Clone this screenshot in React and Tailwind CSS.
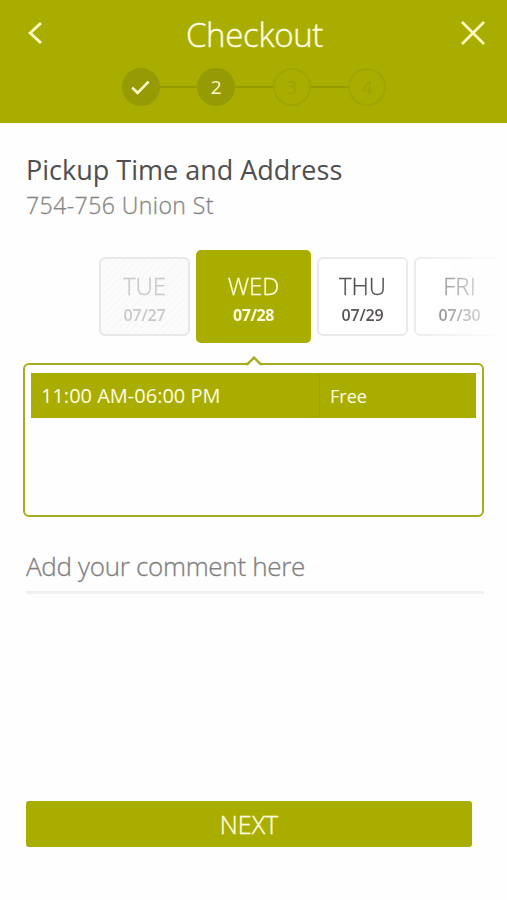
import React, { useState } from 'react';

const steps = [1, 2, 3, 4];

const days = [
    { name: 'TUE', date: '07/27', disabled: true },
    { name: 'WED', date: '07/28' },
    { name: 'THU', date: '07/29' },
    { name: 'FRI', date: '07/30' },
];

const Step = ({ number, current }) => {
    if (number > current) {
        return (
            <div className="flex h-[38px] w-[38px] items-center justify-center rounded-full border-2 border-[#a1a502] text-[19px] text-[#9ea202]">
                {number}
            </div>
        );
    }

    return (
        <div className="flex h-[38px] w-[38px] items-center justify-center rounded-full bg-[#959a05] text-[19px] text-[#fdfbd0]">
            {number < current ? (
                <svg width="19" height="15" viewBox="0 0 19 15" fill="none" stroke="#fdfbd0" strokeWidth="2.6">
                    <path d="M1.2 7.6 L6.6 12.8 L17.6 1.6" />
                </svg>
            ) : (
                number
            )}
        </div>
    );
};

const DayCard = ({ day, active, onSelect }) => {
    if (active) {
        return (
            <button className="flex h-[93px] w-[115px] shrink-0 flex-col items-center rounded-[5px] bg-[#a9ad00] pt-[21px] text-[#fffde0]">
                <span className="text-[24px] leading-[30px] font-light [-webkit-text-stroke:0.3px]">{day.name}</span>
                <span className="text-[16px] leading-[28px] font-bold tracking-[-0.4px]">{day.date}</span>
            </button>
        );
    }

    return (
        <button
            disabled={day.disabled}
            onClick={onSelect}
            className={
                day.disabled
                    ? 'flex h-[79px] w-[91px] shrink-0 flex-col items-center rounded-[6px] border-2 border-[#e8e8e8] bg-[repeating-linear-gradient(135deg,#f9f9f9_0px,#f9f9f9_3px,#fcfcfc_3px,#fcfcfc_5px)] pt-[12px] text-[#c9c9c9]'
                    : 'flex h-[79px] w-[91px] shrink-0 flex-col items-center rounded-[6px] border-2 border-[#e9e9e9] bg-white pt-[12px] text-[#575353]'
            }
        >
            <span className="text-[24px] leading-[30px] font-light [-webkit-text-stroke:0.3px]">{day.name}</span>
            <span className="text-[16px] leading-[28px] font-semibold tracking-[-0.2px]">{day.date}</span>
        </button>
    );
};

const App = () => {
    const [selected, setSelected] = useState('07/28');

    return (
        <div className="flex h-[900px] w-[507px] flex-col overflow-hidden bg-[#fefefe] font-['Open_Sans',sans-serif]">
            <header className="h-[123px] bg-[#a9ad00] text-[#fffde0]">
                <div className="flex h-[66px] items-center justify-between pr-[21px] pl-[28px]">
                    <button>
                        <svg width="15" height="24" viewBox="0 0 15 24" fill="none" stroke="#fffcc8" strokeWidth="2.9">
                            <path d="M13 2 L2.2 12 L13 22" />
                        </svg>
                    </button>
                    <h1 className="pt-[3px] pl-[6px] text-[33px] leading-[44px] font-light tracking-[-0.3px] [-webkit-text-stroke:0.4px]">
                        Checkout
                    </h1>
                    <button>
                        <svg width="26" height="24" viewBox="0 0 26 24" fill="none" stroke="#fffcc8" strokeWidth="2.6">
                            <path d="M2 1 L24 23 M24 1 L2 23" />
                        </svg>
                    </button>
                </div>
                <div className="flex items-center justify-center pt-[2px] pl-[1px]">
                    {steps.map((number) => (
                        <React.Fragment key={number}>
                            {number > 1 && <div className="h-[2px] w-[37.5px] bg-[#989c04]"></div>}
                            <Step number={number} current={2} />
                        </React.Fragment>
                    ))}
                </div>
            </header>

            <main className="flex flex-1 flex-col">
                <div className="pt-[28px] pl-[26px]">
                    <h2 className="text-[27px] leading-[38px] text-[#4f4f4f]">Pickup Time and Address</h2>
                    <p className="text-[23px] leading-[32px] font-light tracking-[0.45px] text-[#858585] [-webkit-text-stroke:0.3px]">
                        754-756 Union St
                    </p>
                </div>

                <div className="mt-[29px] flex h-[93px] items-center gap-[6px] overflow-hidden mask-[linear-gradient(to_right,black_400px,transparent_505px)] pl-[99px]">
                    {days.map((day) => (
                        <DayCard
                            key={day.date}
                            day={day}
                            active={day.date === selected}
                            onSelect={() => setSelected(day.date)}
                        />
                    ))}
                </div>

                <div className="relative mt-[20px] mr-[23px] ml-[23px] h-[154px] rounded-[6px] border-[2.5px] border-[#a5ad1c] p-[6px] pt-[8px]">
                    <svg className="absolute top-[-9px] left-[220px]" width="18" height="11" viewBox="0 0 18 11" fill="none">
                        <path d="M2 7 H16 V10 H2 Z" fill="#fefefe" />
                        <path d="M1 8 H2.5 L9 1.6 L15.5 8 H17" stroke="#a5ad1c" strokeWidth="2.4" />
                    </svg>
                    <div className="flex h-[45px] items-center bg-[#a9ad00] text-[#fffde0]">
                        <div className="flex h-full w-[289px] items-center border-r border-[#a1a500] pt-px pl-[10px] text-[20px]">
                            11:00 AM-06:00 PM
                        </div>
                        <div className="pt-px pl-[10px] text-[18px]">Free</div>
                    </div>
                </div>

                <input
                    type="text"
                    placeholder="Add your comment here"
                    className="mt-[29px] mr-[23px] ml-[26px] h-[48px] border-b-[3px] border-[#f0f0f0] pb-[5px] text-[26px] font-light tracking-[-0.3px] outline-none [-webkit-text-stroke:0.3px] placeholder:text-[#808080]"
                />

                <button className="mt-auto mr-[35px] mb-[53px] ml-[26px] h-[46px] rounded-[3px] bg-[#a9ad00] text-[25px] leading-[47px] font-light text-[#fffde0] [-webkit-text-stroke:0.4px]">
                    NEXT
                </button>
            </main>
        </div>
    );
};

export default App;
